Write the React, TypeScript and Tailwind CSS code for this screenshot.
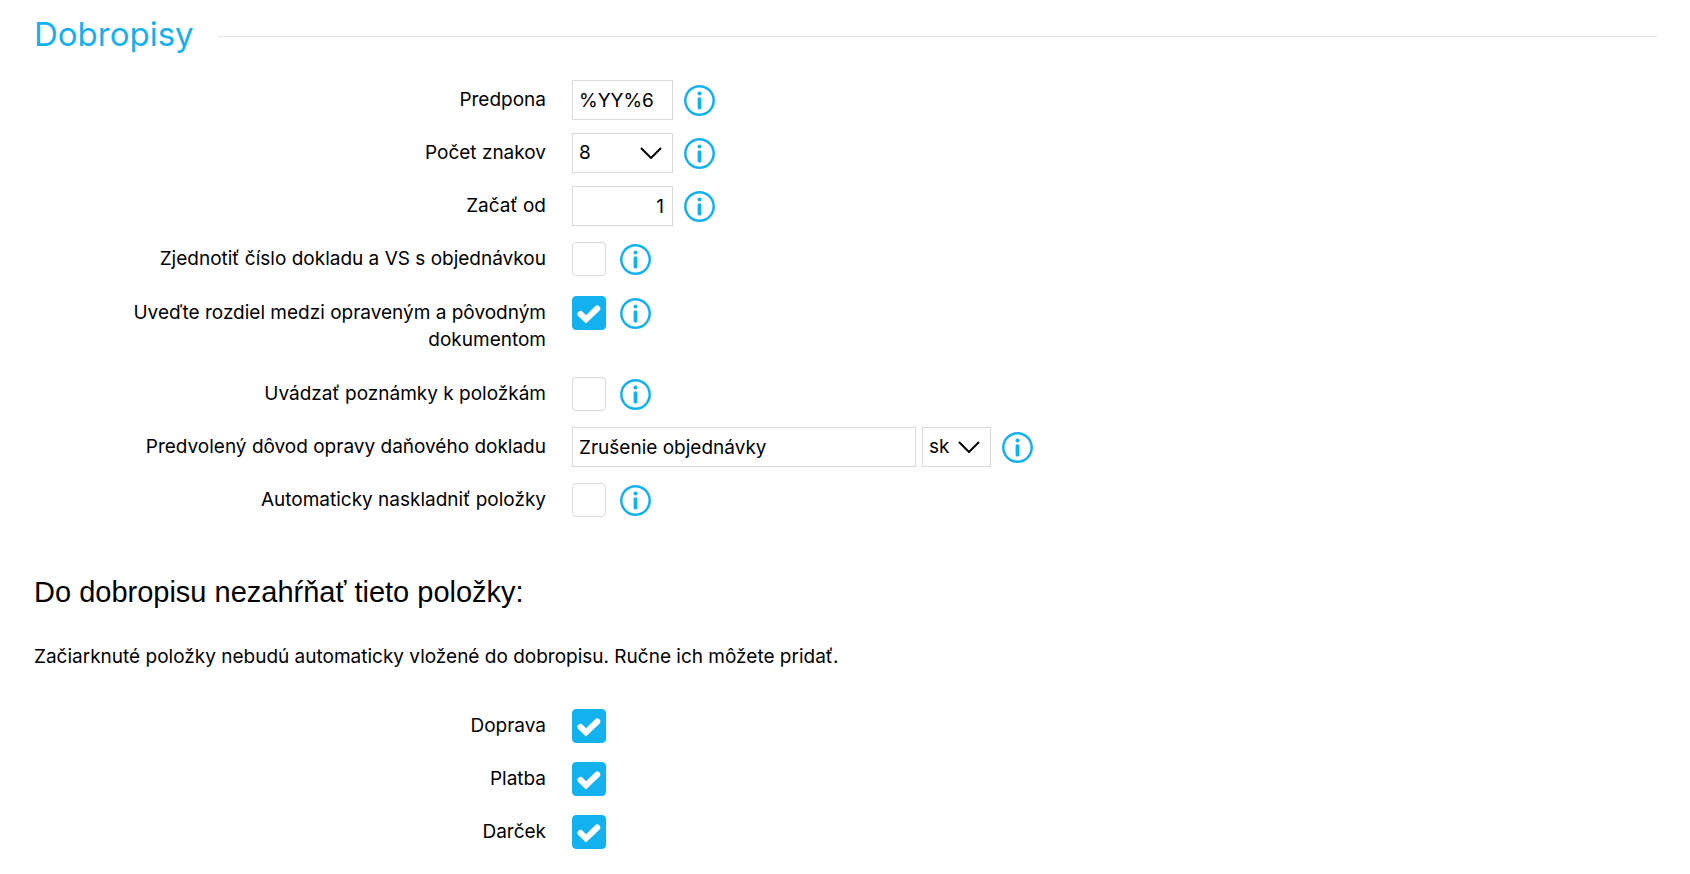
import { useState, type ReactNode } from "react";

function InfoButton({ label }: { label: string }) {
  return (
    <button type="button" aria-label={label} className="shrink-0 text-[#14b1ef]">
      <svg className="block size-[31px]" viewBox="0 0 31 31" fill="none" aria-hidden="true">
        <circle cx="15.5" cy="15.5" r="14.2" stroke="currentColor" strokeWidth="2.5" />
        <circle cx="15.5" cy="8.6" r="2" fill="currentColor" />
        <rect x="13.6" y="12.2" width="3.8" height="12.4" rx="1.9" fill="currentColor" />
      </svg>
    </button>
  );
}

function Checkbox({ id, initial = false }: { id: string; initial?: boolean }) {
  const [checked, setChecked] = useState(initial);
  return (
    <span className="relative block size-[34px] shrink-0">
      <input
        id={id}
        type="checkbox"
        checked={checked}
        onChange={(e) => setChecked(e.target.checked)}
        className="peer block size-full appearance-none rounded border border-[#d9d9d9] bg-white checked:border-[#14b1ef] checked:bg-[#14b1ef]"
      />
      <svg
        className="pointer-events-none absolute inset-0 hidden size-full peer-checked:block"
        viewBox="0 0 34 34"
        fill="none"
        aria-hidden="true"
      >
        <path d="M8.5 18 14 23.3 25.3 12.5" stroke="#fff" strokeWidth="6" strokeLinecap="round" />
      </svg>
    </span>
  );
}

function Select({ id, label, options, className }: { id: string; label?: string; options: string[]; className: string }) {
  return (
    <span className={`relative block h-10 shrink-0 ${className}`}>
      <select
        id={id}
        aria-label={label}
        className="block size-full appearance-none border border-[#d9d9d9] bg-white pl-1.5"
      >
        {options.map((o) => (
          <option key={o}>{o}</option>
        ))}
      </select>
      <svg
        className="pointer-events-none absolute top-3.5 right-[11px] h-3 w-[22px]"
        viewBox="0 0 22 12"
        fill="none"
        aria-hidden="true"
      >
        <path d="M1 1 11 11 21 1" stroke="#000" strokeWidth="2" />
      </svg>
    </span>
  );
}

function Row({ id, label, children }: { id: string; label: string; children: ReactNode }) {
  return (
    <div className="grid grid-cols-[512fr_1085fr] gap-x-[26px]">
      <label htmlFor={id} className="pt-1.5 pb-2 text-right leading-[27px]">
        {label}
      </label>
      <div className="flex h-10 min-w-0 items-center">{children}</div>
    </div>
  );
}

function CheckRow({ id, label, initial }: { id: string; label: string; initial?: boolean }) {
  return (
    <Row id={id} label={label}>
      <div className="flex items-center gap-3.5">
        <Checkbox id={id} initial={initial} />
        <InfoButton label={`Informácie: ${label}`} />
      </div>
    </Row>
  );
}

const field = "h-10 border border-[#d9d9d9] bg-white pl-1.5 pr-2";

export default function App() {
  return (
    <main className="bg-white pr-[33px] pl-[34px] pt-3 pb-6 font-['Inter',sans-serif] text-[19px] text-black">
      <header className="flex items-center gap-6">
        <h1 className="pb-1 text-[33px] leading-[44px] text-[#14b1ef]">Dobropisy</h1>
        <hr className="flex-1 border-[#e5e5e5]" />
      </header>

      <form className="mt-5">
        <div className="flex flex-col gap-3">
          <Row id="predpona" label="Predpona">
            <input id="predpona" type="text" defaultValue="%YY%6" className={`${field} mr-[11px] w-[101px]`} />
            <InfoButton label="Informácie: Predpona" />
          </Row>
          <Row id="pocet" label="Počet znakov">
            <Select id="pocet" options={["8", "9", "10"]} className="mr-[11px] w-[101px]" />
            <InfoButton label="Informácie: Počet znakov" />
          </Row>
          <Row id="zacat" label="Začať od">
            <input id="zacat" type="text" defaultValue="1" className={`${field} mr-[11px] w-[101px] text-right`} />
            <InfoButton label="Informácie: Začať od" />
          </Row>
          <div className="flex flex-col gap-[13px]">
            <CheckRow id="zjednotit" label="Zjednotiť číslo dokladu a VS s objednávkou" />
            <CheckRow id="rozdiel" label="Uveďte rozdiel medzi opraveným a pôvodným dokumentom" initial />
            <CheckRow id="poznamky" label="Uvádzať poznámky k položkám" />
          </div>
          <Row id="dovod" label="Predvolený dôvod opravy daňového dokladu">
            <input
              id="dovod"
              type="text"
              defaultValue="Zrušenie objednávky"
              className={`${field} mr-1.5 w-[344px]`}
            />
            <Select id="jazyk" label="Jazyk" options={["sk", "cs", "en"]} className="mr-[11px] w-[69px]" />
            <InfoButton label="Informácie: Predvolený dôvod opravy" />
          </Row>
          <CheckRow id="naskladnit" label="Automaticky naskladniť položky" />
        </div>

        <h2 className="mt-[51px] font-['Liberation_Sans',sans-serif] text-[29px] leading-10">
          Do dobropisu nezahŕňať tieto položky:
        </h2>
        <p className="mt-[31px] leading-[27px]">
          Začiarknuté položky nebudú automaticky vložené do dobropisu. Ručne ich môžete pridať.
        </p>

        <div className="mt-9 flex flex-col gap-3">
          <Row id="doprava" label="Doprava">
            <Checkbox id="doprava" initial />
          </Row>
          <Row id="platba" label="Platba">
            <Checkbox id="platba" initial />
          </Row>
          <Row id="darcek" label="Darček">
            <Checkbox id="darcek" initial />
          </Row>
        </div>
      </form>
    </main>
  );
}
